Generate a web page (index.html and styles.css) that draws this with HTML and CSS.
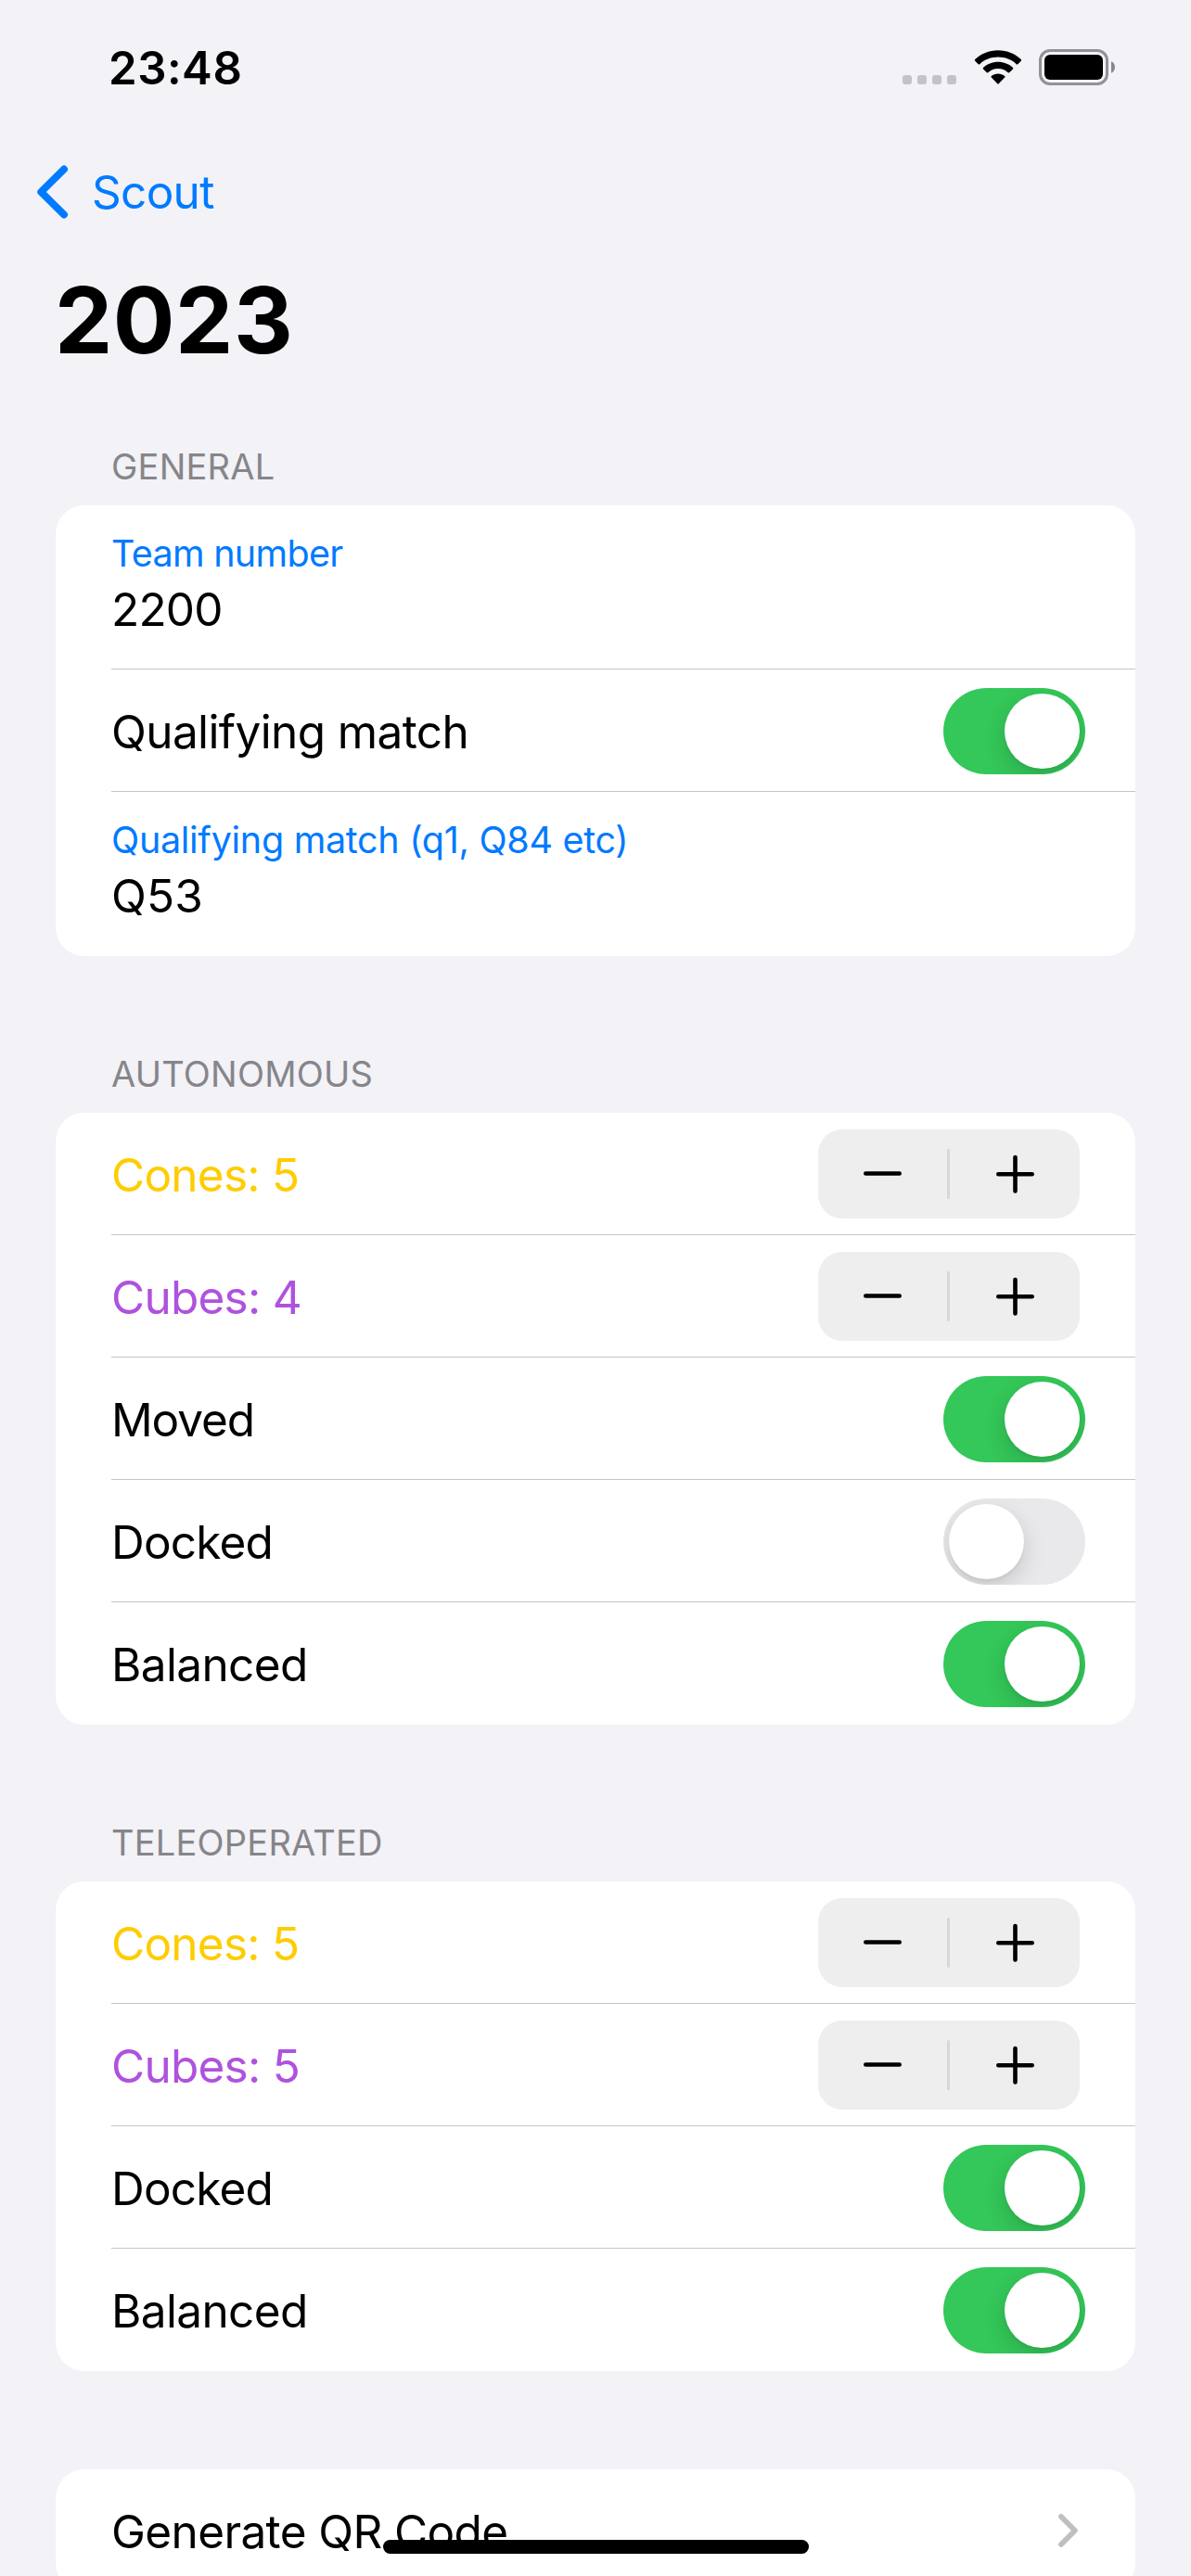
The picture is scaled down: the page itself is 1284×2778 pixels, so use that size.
FILE: index.html
```
<!DOCTYPE html>
<html lang="en">
<head>
<meta charset="utf-8">
<title>2023 – Scout</title>
<link rel="stylesheet" href="styles.css">
</head>
<body>
<svg class="symbols" aria-hidden="true">
  <symbol id="stepper-icons" viewBox="0 0 282 96">
    <path d="M51.3 47.5H87.7M194.3 48.2H230.7M212.5 30V66.4" fill="none" stroke="#000" stroke-width="4.6" stroke-linecap="round"/>
    <rect x="139" y="21" width="3" height="54" rx="1.5" fill="#d7d7d7"/>
  </symbol>
</svg>
<div class="screen">
  <header class="status-bar">
    <span class="time">23:48</span>
    <div class="status-icons">
      <div class="signal"><i></i><i></i><i></i><i></i></div>
      <svg class="wifi" width="52" height="38" viewBox="0 0 52 38">
        <path d="M26 0.2C35.8 0.2 44.6 4 50.8 10.1Q51.6 10.9 50.8 11.7L47.3 15.2Q46.5 16 45.7 15.2C40.6 10.3 33.6 7.6 26 7.6S11.400 10.3 6.300 15.2Q5.500 16 4.700 15.2L1.200 11.700Q0.400 10.900 1.200 10.100C7.400 4 16.200 0.200 26 0.200Z"/>
        <path d="M26 12.800C32.200 12.800 37.800 15.100 42 19Q42.800 19.800 42 20.600L38.400 24.100Q37.600 24.900 36.800 24.200C33.900 21.700 30.200 20.100 26 20.100S18.100 21.700 15.200 24.200Q14.400 24.900 13.600 24.100L10 20.600Q9.200 19.800 10 19C14.200 15.100 19.800 12.800 26 12.800Z"/>
        <path d="M26 25.500C28.800 25.500 31.300 26.400 33.200 28Q34 28.700 33.200 29.500L26.700 36.300Q26 37 25.300 36.300L18.800 29.500Q18 28.700 18.800 28C20.700 26.400 23.200 25.500 26 25.500Z"/>
      </svg>
      <svg class="battery" width="83" height="39" viewBox="0 0 83 39">
        <rect x="1.500" y="1.500" width="72" height="36" rx="10.500" fill="none" stroke="#929195" stroke-width="3"/>
        <rect x="6" y="6" width="63" height="27" rx="6"/>
        <path d="M78 13.300C80.600 14.400 82 16.700 82 19.500S80.600 24.600 78 25.700Z" fill="#87868a"/>
      </svg>
    </div>
  </header>

  <nav class="nav-bar">
    <svg class="back-icon" width="36" height="60" viewBox="0 0 36 60">
      <path d="M29 5.500L4.300 30L29 54.500" fill="none" stroke="#007aff" stroke-width="8" stroke-linecap="round" stroke-linejoin="round"/>
    </svg>
    <a class="back">Scout</a>
  </nav>
  <h1 class="title">2023</h1>

  <section class="group">
    <h2 class="group-title">GENERAL</h2>
    <div class="card">
      <div class="row field">
        <label class="field-label team">Team number</label>
        <span class="field-value number">2200</span>
      </div>
      <div class="row"><span class="label">Qualifying match</span><span class="switch on"></span></div>
      <div class="row field">
        <label class="field-label">Qualifying match (q1, Q84 etc)</label>
        <span class="field-value">Q53</span>
      </div>
    </div>
  </section>

  <section class="group">
    <h2 class="group-title">AUTONOMOUS</h2>
    <div class="card">
      <div class="row"><span class="label cones">Cones: 5</span><svg class="stepper"><use href="#stepper-icons"/></svg></div>
      <div class="row"><span class="label cubes">Cubes: 4</span><svg class="stepper"><use href="#stepper-icons"/></svg></div>
      <div class="row"><span class="label moved">Moved</span><span class="switch on"></span></div>
      <div class="row"><span class="label docked">Docked</span><span class="switch"></span></div>
      <div class="row"><span class="label">Balanced</span><span class="switch on"></span></div>
    </div>
  </section>

  <section class="group">
    <h2 class="group-title">TELEOPERATED</h2>
    <div class="card">
      <div class="row"><span class="label cones">Cones: 5</span><svg class="stepper"><use href="#stepper-icons"/></svg></div>
      <div class="row"><span class="label cubes">Cubes: 5</span><svg class="stepper"><use href="#stepper-icons"/></svg></div>
      <div class="row"><span class="label docked">Docked</span><span class="switch on"></span></div>
      <div class="row"><span class="label">Balanced</span><span class="switch on"></span></div>
    </div>
  </section>

  <section class="group action">
    <div class="card">
      <div class="row link">
        <span class="label">Generate QR Code</span>
        <svg width="21" height="36" viewBox="0 0 21 36">
          <path d="M3 3L17.900 18L3 33" fill="none" stroke="#bfbfbf" stroke-width="5.800" stroke-linecap="round" stroke-linejoin="round"/>
        </svg>
      </div>
    </div>
  </section>
  <div class="home-indicator"></div>
</div>
</body>
</html>
```
FILE: styles.css
```
* { box-sizing: border-box; }

body {
  margin: 0;
  background: #f2f2f7;
  color: #000;
  font: 400 49.5px/60px Inter, "Liberation Sans", sans-serif;
}

.symbols { display: none; }

.screen {
  position: relative;
  width: 1284px;
  height: 2778px;
  overflow: hidden;
}

/* Status bar */
.status-bar {
  display: flex;
  justify-content: space-between;
  height: 141px;
  padding: 43px 81px 0 117px;
}
.time {
  font-size: 49.2px;
  font-weight: 600;
  letter-spacing: 0.5px;
}
.status-icons {
  display: flex;
  align-items: flex-start;
  padding-top: 10px;
}
.signal { display: flex; gap: 6px; padding-top: 28px; }
.signal i { width: 10px; height: 10px; border-radius: 3px; background: #c3c2c7; }
.wifi { margin: 1px 0 0 19px; }
.battery { margin-left: 18px; }

/* Navigation */
.nav-bar {
  display: flex;
  align-items: center;
  height: 132px;
  padding-left: 40px;
}
.back { margin-left: 23px; color: #007aff; letter-spacing: -0.7px; }
.title {
  margin: 0;
  padding: 12px 0 0 59px;
  font-size: 99px;
  font-weight: 700;
  line-height: 120px;
  letter-spacing: 0.5px;
}

/* Grouped list */
.group { padding: 0 60px; margin-top: 104px; }
.title + .group { margin-top: 75px; }
.group.action { margin-top: 106px; }
.group-title {
  margin: 0 0 19px 60px;
  color: #86858a;
  font-size: 38px;
  font-weight: 400;
  line-height: 46px;
  letter-spacing: 0.22px;
}
.card {
  padding-left: 60px;
  border-radius: 31px;
  background: #fff;
  overflow: hidden;
}
.row {
  display: flex;
  align-items: center;
  justify-content: space-between;
  height: 132px;
  padding-right: 54px;
  border-bottom: 1px solid #c6c6c8;
}
.row:last-child { border-bottom-color: transparent; }
.label { padding-top: 3px; letter-spacing: -0.62px; }
.cones, .cubes { letter-spacing: -0.75px; }
.cones { color: #ffcc00; }
.cubes { color: #af52de; }
.moved { letter-spacing: -1.1px; }
.docked { letter-spacing: -0.8px; }
.link { padding-right: 62px; }

/* Text fields with floating labels */
.field {
  flex-direction: column;
  align-items: flex-start;
  justify-content: flex-start;
  height: 177px;
  padding-top: 27px;
}
.field-label {
  color: #007aff;
  font-size: 39.5px;
  line-height: 50px;
  letter-spacing: -0.3px;
}
.field-label.team { letter-spacing: -0.7px; }
.field-value { margin-top: 5px; letter-spacing: 0.2px; }
.field-value.number { letter-spacing: -0.8px; }

/* Controls */
.switch {
  display: flex;
  width: 153px;
  height: 93px;
  margin-top: 2px;
  padding: 6px;
  border-radius: 47px;
  background: #e9e9eb;
  overflow: hidden;
}
.switch::before {
  content: "";
  width: 81px;
  height: 81px;
  border-radius: 50%;
  background: #fff;
  box-shadow: 0 9px 24px rgba(0, 0, 0, 0.15), 0 3px 3px rgba(0, 0, 0, 0.04);
}
.switch.on { justify-content: flex-end; background: #34c759; }
.stepper {
  width: 282px;
  height: 96px;
  margin-right: 6px;
  border-radius: 26px;
  background: #eeeeef;
}

.home-indicator {
  position: absolute;
  left: 413px;
  bottom: 24px;
  width: 459px;
  height: 15px;
  border-radius: 8px;
  background: #000;
}
```
